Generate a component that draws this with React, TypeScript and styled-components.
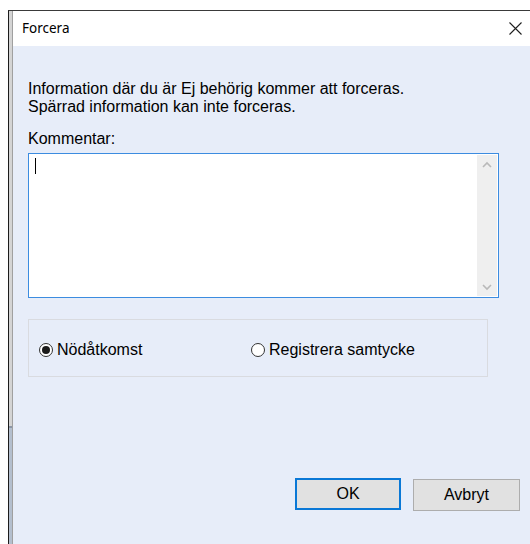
import React from "react";
import styled, { createGlobalStyle } from "styled-components";

const Global = createGlobalStyle`
  html, body {
    margin: 0;
    padding: 0;
    background: #ffffff;
    width: 530px;
    height: 544px;
    overflow: hidden;
  }
  * { box-sizing: border-box; }
`;

const Page = styled.div`
  width: 530px;
  height: 544px;
  padding: 10px 0 0 8px;
  background: #ffffff;
`;

const Window = styled.div`
  display: flex;
  height: 534px;
  border-top: 1px solid #3a3a3a;
  border-left: 1px solid #1c1c1c;
`;

/* thin frame edge of the window on the left */
const FrameEdge = styled.div`
  width: 4px;
  flex: none;
  background: linear-gradient(
    to bottom,
    #d4d4d4 0,
    #d4d4d4 415px,
    #8c96a6 415px,
    #8c96a6 417px,
    #b4bfce 417px
  );
  border-right: 1px solid #a0a0a0;
`;

const Main = styled.div`
  flex: 1;
  display: flex;
  flex-direction: column;
  min-width: 0;
`;

const TitleBar = styled.div`
  height: 35px;
  flex: none;
  display: flex;
  align-items: center;
  justify-content: space-between;
  padding: 0 8px 0 9px;
  background: #ffffff;
`;

const Title = styled.span`
  font-family: "Noto Sans", "Segoe UI", sans-serif;
  font-size: 13.5px;
  color: #000000;
  margin-top: -1px;
`;

const CloseIcon = styled.svg`
  width: 13px;
  height: 13px;
  margin-top: -1px;
`;

const Body = styled.div`
  flex: 1;
  display: flex;
  flex-direction: column;
  background: #e7edf9;
  padding: 34px 10px 0 15px;
  font-family: "Liberation Sans", Arial, sans-serif;
  font-size: 16px;
  line-height: 18px;
  color: #000000;
`;

const Message = styled.p`
  margin: 0;
`;

const Label = styled.div`
  margin-top: 14px;
`;

const CommentBox = styled.div`
  margin-top: 5px;
  width: 471px;
  height: 145px;
  border: 1px solid #3c8ce0;
  background: #ffffff;
  display: flex;
  justify-content: space-between;
  padding: 1px;
`;

const Caret = styled.div`
  width: 1px;
  height: 16px;
  background: #000000;
  margin: 3px 0 0 5px;
`;

const ScrollBar = styled.div`
  width: 20px;
  background: #efefef;
  display: flex;
  flex-direction: column;
  justify-content: space-between;
  align-items: center;
  padding: 6px 0 5px;
`;

const Chevron = styled.svg`
  width: 10px;
  height: 7px;
`;

const Options = styled.div`
  margin-top: 21px;
  width: 460px;
  height: 58px;
  border: 1px solid #d9dbe0;
  display: flex;
  align-items: center;
  padding: 0 0 0 10px;
`;

const Option = styled.label<{ $width?: number }>`
  display: flex;
  align-items: center;
  width: ${(p) => (p.$width ? `${p.$width}px` : "auto")};
  gap: 4px;
  margin-top: 4px;
`;

const RadioDot = styled.span<{ $checked?: boolean }>`
  width: 14px;
  height: 14px;
  border-radius: 50%;
  border: 1px solid #333333;
  background: #ffffff;
  display: flex;
  align-items: center;
  justify-content: center;
  &::after {
    content: "";
    width: 8px;
    height: 8px;
    border-radius: 50%;
    background: ${(p) => (p.$checked ? "#1a1a1a" : "transparent")};
  }
`;

const Buttons = styled.div`
  margin-top: 101px;
  display: flex;
  justify-content: flex-end;
  gap: 12px;
`;

const Button = styled.button<{ $primary?: boolean }>`
  width: ${(p) => (p.$primary ? 106 : 107)}px;
  height: 32px;
  background: #e1e1e1;
  border: ${(p) => (p.$primary ? "2px solid #0a78d6" : "1px solid #adadad")};
  font-family: "Liberation Sans", Arial, sans-serif;
  font-size: 16px;
  color: #000000;
  padding: 0;
  margin-top: ${(p) => (p.$primary ? 0 : 1)}px;
`;

export default function App() {
  return (
    <>
      <Global />
      <Page>
        <Window>
          <FrameEdge />
          <Main>
            <TitleBar>
              <Title>Forcera</Title>
              <CloseIcon viewBox="0 0 13 13">
                <path d="M0.5 0.5 L12.5 12.5 M12.5 0.5 L0.5 12.5" stroke="#1e1e1e" strokeWidth="1.1" fill="none" />
              </CloseIcon>
            </TitleBar>
            <Body>
              <Message>
                Information där du är Ej behörig kommer att forceras.
                <br />
                Spärrad information kan inte forceras.
              </Message>
              <Label>Kommentar:</Label>
              <CommentBox>
                <Caret />
                <ScrollBar>
                  <Chevron viewBox="0 0 10 7">
                    <path d="M1 6 L5 2 L9 6" stroke="#b9b9b9" strokeWidth="1.6" fill="none" />
                  </Chevron>
                  <Chevron viewBox="0 0 10 7">
                    <path d="M1 1 L5 5 L9 1" stroke="#b9b9b9" strokeWidth="1.6" fill="none" />
                  </Chevron>
                </ScrollBar>
              </CommentBox>
              <Options>
                <Option $width={212}>
                  <RadioDot $checked />
                  Nödåtkomst
                </Option>
                <Option>
                  <RadioDot />
                  Registrera samtycke
                </Option>
              </Options>
              <Buttons>
                <Button $primary>OK</Button>
                <Button>Avbryt</Button>
              </Buttons>
            </Body>
          </Main>
        </Window>
      </Page>
    </>
  );
}
